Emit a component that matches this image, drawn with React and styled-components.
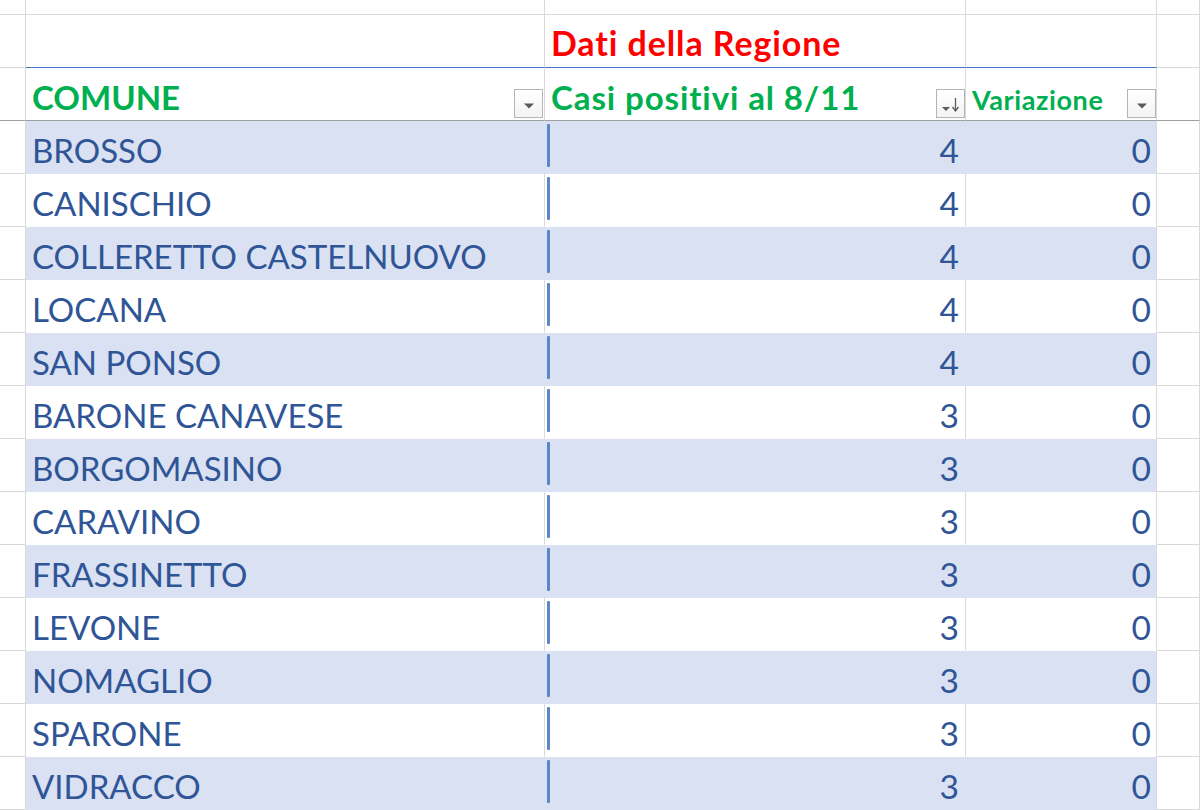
import React from 'react';
import styled, { createGlobalStyle } from 'styled-components';

const GlobalStyle = createGlobalStyle`
  html, body {
    margin: 0;
    padding: 0;
    background: #ffffff;
    overflow: hidden;
  }
  body {
    font-family: Lato, "Open Sans", sans-serif;
  }
`;

const GRID = '#d9d9d9';
const BAND = '#d9e1f2';
const INK = '#2f5597';

const Sheet = styled.div`
  width: 1200px;
  height: 810px;
  overflow: hidden;
`;

const Row = styled.div`
  display: grid;
  grid-template-columns: 26px 519px 421px 191px 1fr;
  height: ${({ h }) => h}px;
`;

const Cell = styled.div`
  box-sizing: border-box;
  display: flex;
  align-items: flex-end;
  min-width: 0;
  background: ${({ fill }) => fill || '#ffffff'};
  border-right: 1px solid ${({ right }) => right || GRID};
  border-bottom: 1px solid ${({ bottom }) => bottom || GRID};
  padding: 0 ${({ pr }) => pr || 0}px ${({ pb }) => pb || 0}px ${({ pl }) => pl || 0}px;
`;

const Title = styled.span`
  font-weight: 700;
  font-size: 34px;
  line-height: 40px;
  letter-spacing: 0.9px;
  color: #ff0000;
  white-space: nowrap;
`;

const HeadText = styled.span`
  font-weight: 700;
  font-size: ${({ small }) => (small ? 27 : 33)}px;
  line-height: ${({ small }) => (small ? 30 : 40)}px;
  letter-spacing: ${({ spread }) => spread || 0}px;
  color: #00b050;
  white-space: nowrap;
  margin-bottom: ${({ small }) => (small ? 3 : 1)}px;
`;

const Name = styled.span`
  font-size: 33px;
  line-height: 40px;
  color: ${INK};
  white-space: nowrap;
`;

const Num = styled.span`
  font-size: 33.5px;
  line-height: 40px;
  color: ${INK};
  margin-left: auto;
`;

const Bar = styled.div`
  width: 3px;
  align-self: stretch;
  margin: 3px 0 3px 2px;
  background: #5b86c8;
  border-radius: 1px;
`;

const FilterBtn = styled.div`
  box-sizing: border-box;
  width: 29px;
  height: 29px;
  margin-left: auto;
  flex-shrink: 0;
  border: 1px solid #b4b4b4;
  background: linear-gradient(#ffffff, #f3f3f3);
  display: flex;
  align-items: center;
  justify-content: center;
`;

const Arrow = () => (
  <svg width="12" height="8" viewBox="0 0 12 8" style={{ marginTop: 4 }}>
    <path d="M1 1.5h10L6 6.5z" fill="#5a5a5a" />
  </svg>
);

const SortArrow = () => (
  <svg width="20" height="18" viewBox="0 0 20 18" style={{ marginTop: 2 }}>
    <path d="M1 11h8l-4 4z" fill="#5a5a5a" />
    <path d="M14.5 2v12" stroke="#5a5a5a" strokeWidth="1.3" />
    <path d="M11.5 11l3 4 3-4" fill="none" stroke="#5a5a5a" strokeWidth="1.3" />
  </svg>
);

const rows = [
  ['BROSSO', 4],
  ['CANISCHIO', 4],
  ['COLLERETTO CASTELNUOVO', 4],
  ['LOCANA', 4],
  ['SAN PONSO', 4],
  ['BARONE CANAVESE', 3],
  ['BORGOMASINO', 3],
  ['CARAVINO', 3],
  ['FRASSINETTO', 3],
  ['LEVONE', 3],
  ['NOMAGLIO', 3],
  ['SPARONE', 3],
  ['VIDRACCO', 3],
];

export default function App() {
  return (
    <Sheet>
      <GlobalStyle />
      <Row h={15}>
        <Cell />
        <Cell />
        <Cell />
        <Cell />
        <Cell />
      </Row>
      <Row h={53}>
        <Cell />
        <Cell bottom="#4472c4" />
        <Cell bottom="#4472c4" pl={6} pb={4}>
          <Title>Dati della Regione</Title>
        </Cell>
        <Cell bottom="#4472c4" />
        <Cell />
      </Row>
      <Row h={53}>
        <Cell bottom="#9f9f9f" />
        <Cell bottom="#9f9f9f" pl={6} pr={1} pb={2}>
          <HeadText>COMUNE</HeadText>
          <FilterBtn>
            <Arrow />
          </FilterBtn>
        </Cell>
        <Cell bottom="#9f9f9f" pl={6} pb={2}>
          <HeadText spread={0.9}>Casi positivi al 8/11</HeadText>
          <FilterBtn>
            <SortArrow />
          </FilterBtn>
        </Cell>
        <Cell bottom="#9f9f9f" pl={6} pb={2}>
          <HeadText small spread={0.6}>Variazione</HeadText>
          <FilterBtn>
            <Arrow />
          </FilterBtn>
        </Cell>
        <Cell bottom="#9f9f9f" />
      </Row>
      {rows.map(([name, n], i) => {
        const band = i % 2 === 0;
        const fill = band ? BAND : '#ffffff';
        return (
          <Row h={53} key={name}>
            <Cell />
            <Cell fill={fill} bottom={fill} right={band ? BAND : GRID} pl={6} pb={3}>
              <Name>{name}</Name>
            </Cell>
            <Cell fill={fill} bottom={fill} right={band ? BAND : GRID} pr={6} pb={3}>
              <Bar />
              <Num>{n}</Num>
            </Cell>
            <Cell fill={fill} bottom={fill} pr={5} pb={3}>
              <Num>0</Num>
            </Cell>
            <Cell />
          </Row>
        );
      })}
    </Sheet>
  );
}
